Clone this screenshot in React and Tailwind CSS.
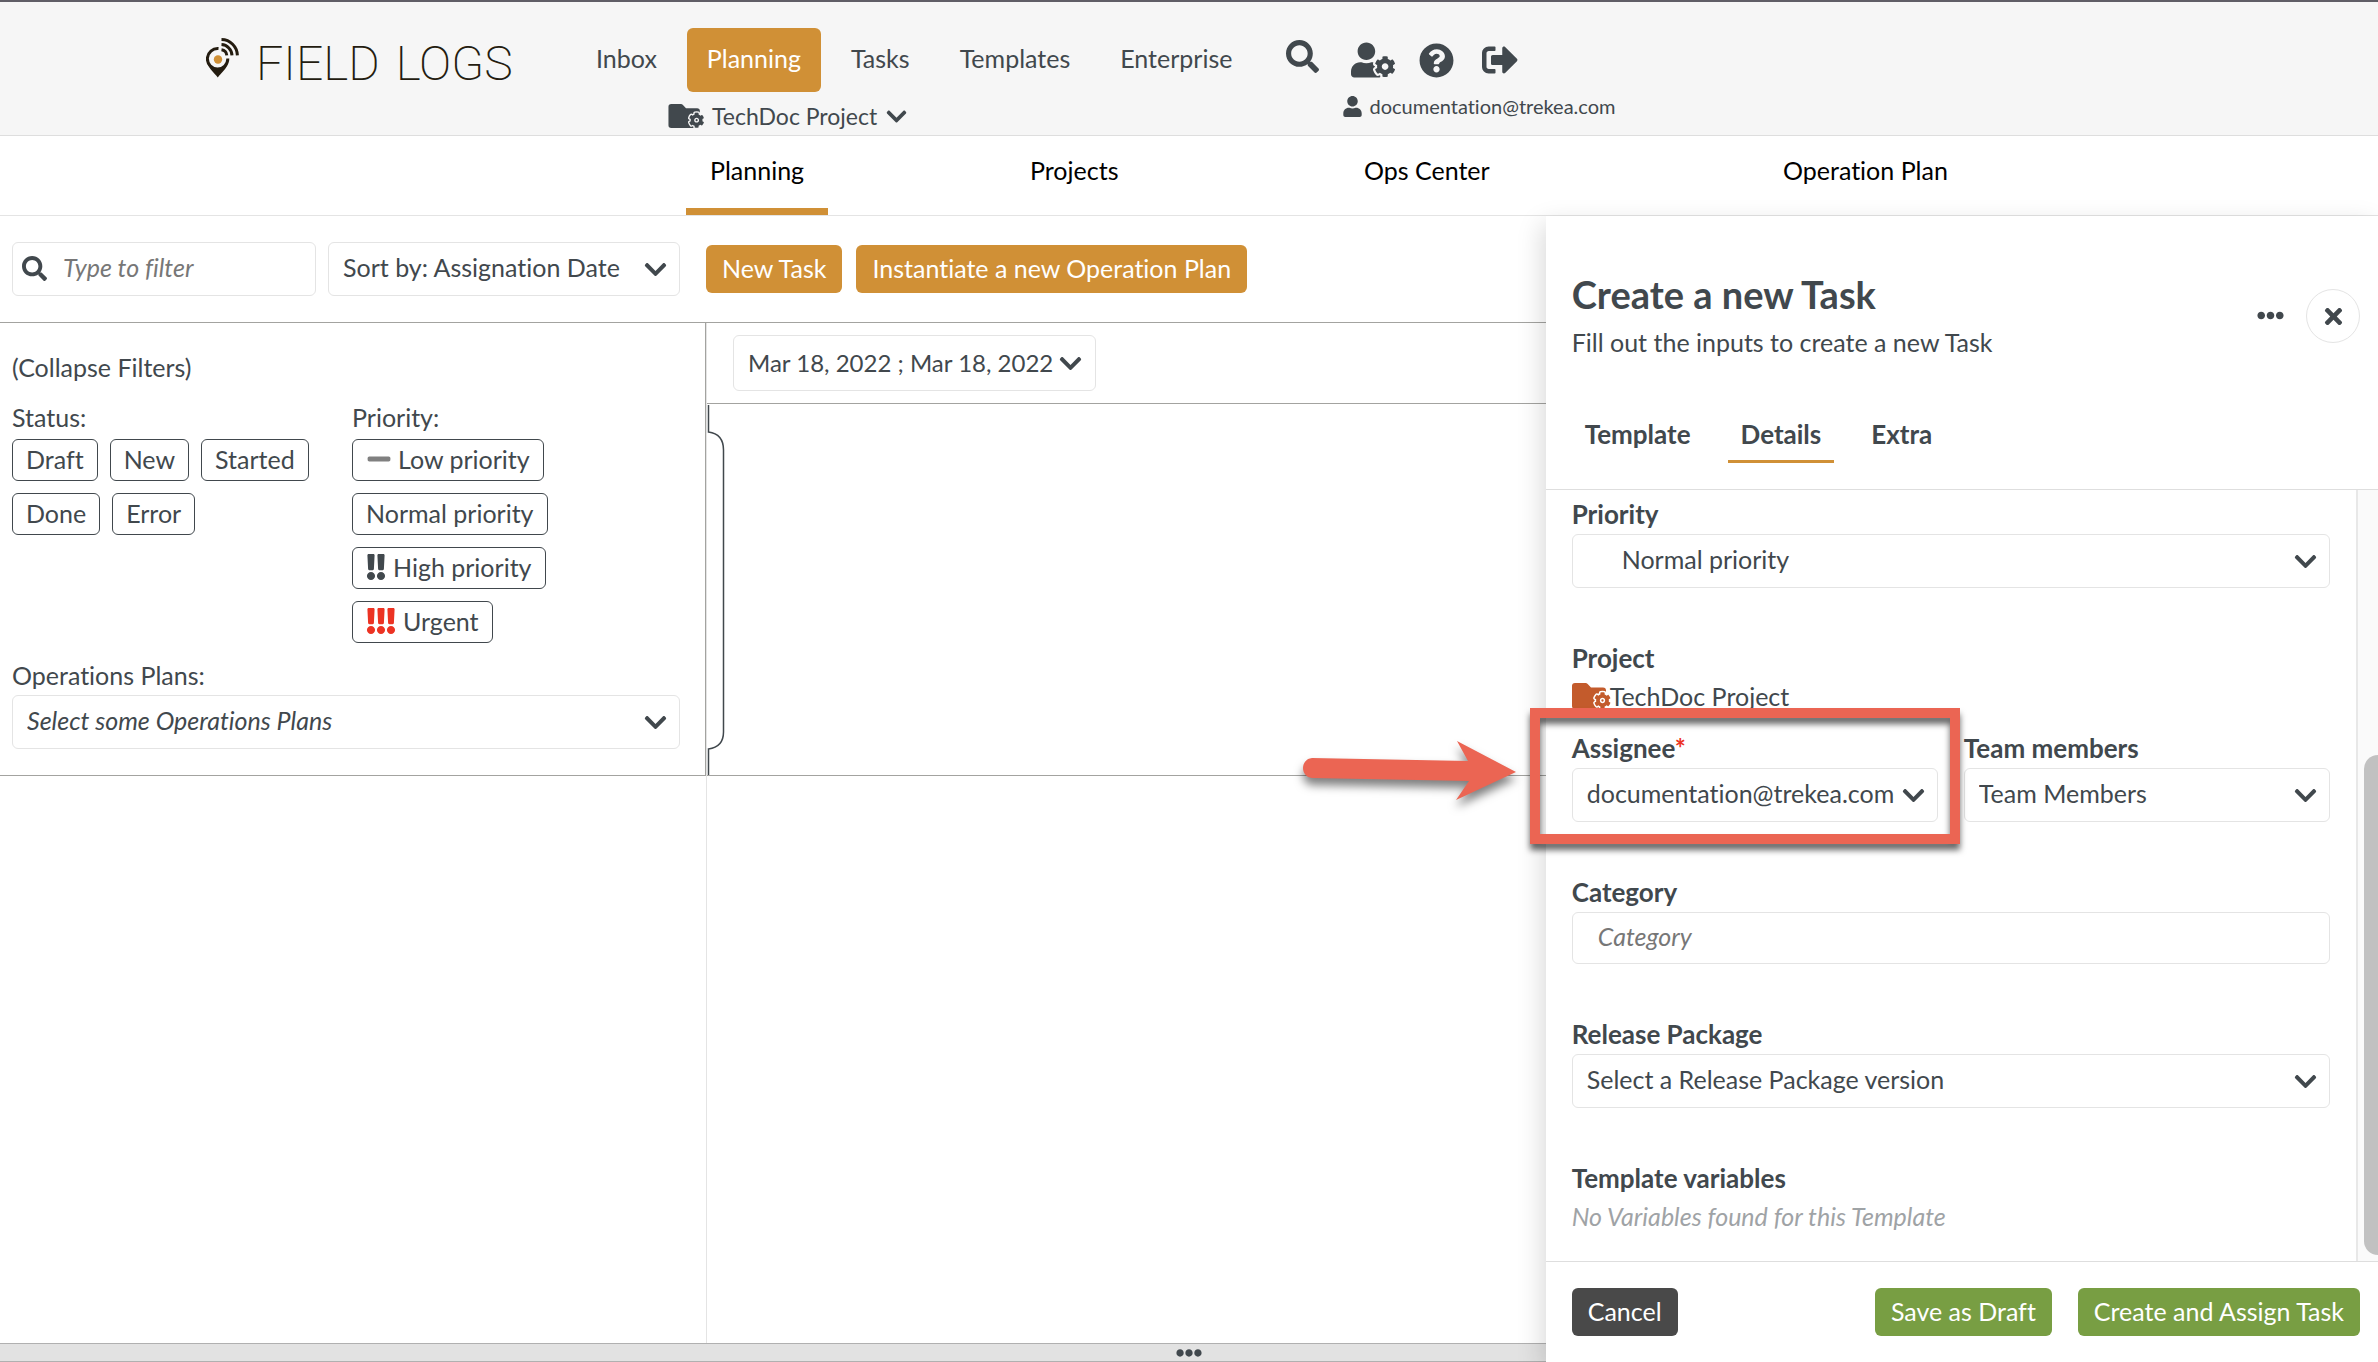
import React from 'react';
import {
  FaChevronDown,
  FaCog,
  FaEllipsisH,
  FaExclamation,
  FaMinus,
  FaQuestionCircle,
  FaSearch,
  FaSignOutAlt,
  FaTimes,
  FaUser,
  FaUserCog,
} from 'react-icons/fa';
import clsx from 'clsx';

const navLinks = ['Inbox', 'Planning', 'Tasks', 'Templates', 'Enterprise'];

const subTabs = ['Planning', 'Projects', 'Ops Center', 'Operation Plan'];

const statuses = ['Draft', 'New', 'Started', 'Done', 'Error'];

const priorities = [
  { label: 'Low priority', icon: FaMinus, count: 1, color: 'text-[#808080]', size: 26, iconClass: '' },
  { label: 'Normal priority', icon: null, count: 0 },
  { label: 'High priority', icon: FaExclamation, count: 2, color: 'text-[#41484d]', size: 26, iconClass: '-mx-2' },
  { label: 'Urgent', icon: FaExclamation, count: 3, color: 'text-[#ec3323]', size: 26, iconClass: '-mx-2' },
];

const drawerTabs = ['Template', 'Details', 'Extra'];

const Logo = () => (
  <a href="#home" className="flex items-start gap-4 text-[#241c10]">
    <svg width="34" height="42" viewBox="0 0 34 42" fill="none" aria-hidden="true">
      <path d="M12.5 10.6A10.2 10.2 0 1 0 21.8 20.6" stroke="#241c10" strokeWidth="3" />
      <path d="M1.2 24.5C3 31 8.5 35 11.8 39.5C15 35 20.5 31 22.5 24.5C19.5 29.5 16 31.5 11.8 31.5C7.5 31.5 4 29.5 1.2 24.5Z" fill="#241c10" />
      <circle cx="12" cy="21.5" r="4.2" fill="#d09036" />
      <path d="M15.5 11.8A6.2 6.2 0 0 1 20.8 17.4" stroke="#241c10" strokeWidth="3" />
      <path d="M15.5 6.6A11.2 11.2 0 0 1 26 17.4" stroke="#241c10" strokeWidth="3" />
      <path d="M15.5 1.6A16.2 16.2 0 0 1 31.4 17.4" stroke="#241c10" strokeWidth="3" />
    </svg>
    <span className="flex gap-4 pt-[2px] font-[Roboto,sans-serif] text-5xl font-extralight">
      <span>FIELD</span>
      <span>LOGS</span>
    </span>
  </a>
);

const FolderCog = ({ halo, className }) => (
  <svg width="38" height="26" viewBox="0 0 38 26" overflow="visible" className={className} aria-hidden="true">
    <path d="M3 0h10.5a3 3 0 0 1 2.2 1L19 4.5h12a3 3 0 0 1 3 3V23a3 3 0 0 1-3 3H3a3 3 0 0 1-3-3V3a3 3 0 0 1 3-3z" fill="currentColor" />
    <svg x="22" y="9" width="17" height="17" viewBox="0 0 512 512" overflow="visible">
      <FaCog size={512} stroke={halo} strokeWidth={90} color={halo} overflow="visible" />
      <FaCog size={512} />
    </svg>
  </svg>
);

const Select = ({ id, label, children, className, selectClass }) => (
  <div className={clsx('relative', className)}>
    <select
      id={id}
      aria-label={label}
      className={clsx('h-[54px] w-full appearance-none rounded-md border border-[#e4e4e4] bg-white pr-8 pb-1 outline-none', selectClass || 'pl-[14px]')}
    >
      <option>{children}</option>
    </select>
    <FaChevronDown size={25} className="pointer-events-none absolute top-[15px] right-3" />
  </div>
);

const Field = ({ id, label, required, children, className }) => (
  <div className={className}>
    <label htmlFor={id} className="block text-[26px] leading-10 font-bold">
      {label}
      {required && <span className="text-[#ec3323]">*</span>}
    </label>
    {children}
  </div>
);

const Header = () => (
  <header className="flex h-[136px] border-t-2 border-b border-t-[#605e66] border-b-[#dedede] bg-[#f6f6f6] pl-[206px]">
    <div className="w-[370px] pt-9">
      <Logo />
    </div>
    <div className="pt-[26px]">
      <nav className="flex gap-[10px]">
        {navLinks.map((link) => (
          <a
            key={link}
            href={`#${link.toLowerCase()}`}
            className={clsx('flex h-16 items-center rounded-md px-5 pb-1', link === 'Planning' && 'bg-[#d09036] text-white')}
          >
            {link}
          </a>
        ))}
      </nav>
      <button type="button" className="ml-[92px] flex h-12 items-center gap-2 text-[23px]">
        <FolderCog halo="#f6f6f6" className="h-6 w-9" />
        <span>TechDoc Project</span>
        <FaChevronDown size={23} />
      </button>
    </div>
    <div className="pt-9 pl-[34px]">
      <div className="flex h-11 items-center gap-6">
        <button type="button" aria-label="Search" className="self-start pt-[2px] pr-2">
          <FaSearch size={33} />
        </button>
        <button type="button" aria-label="User settings">
          <FaUserCog size={44} />
        </button>
        <button type="button" aria-label="Help">
          <FaQuestionCircle size={35} />
        </button>
        <button type="button" aria-label="Sign out" className="pl-1">
          <FaSignOutAlt size={36} />
        </button>
      </div>
      <div className="flex h-12 items-center gap-[6px] pl-[56px] text-[20px]">
        <FaUser size={21} />
        <span>documentation@trekea.com</span>
      </div>
    </div>
  </header>
);

const SubTabs = () => (
  <nav className="grid h-20 grid-cols-[320fr_334fr_419fr_619fr] border-b border-[#e4e4e4] pl-[686px] text-black">
    {subTabs.map((tab, i) => (
      <a
        key={tab}
        href={`#${tab.toLowerCase().replace(' ', '-')}`}
        className={clsx('justify-self-start border-b-[7px] px-6 pt-[14px] leading-10', i === 0 ? 'border-[#d09036]' : 'border-transparent')}
      >
        {tab}
      </a>
    ))}
  </nav>
);

const Toolbar = () => (
  <div className="flex h-[107px] items-center border-b border-[#a3a3a0] pb-[1px] pl-3">
    <div className="relative w-[304px]">
      <FaSearch size={25} className="absolute top-[14px] left-[10px]" />
      <input
        type="text"
        aria-label="Filter"
        placeholder="Type to filter"
        className="h-[54px] w-full rounded-md border border-[#e4e4e4] pb-1 pl-[50px] italic outline-none placeholder:text-[#777]"
      />
    </div>
    <Select label="Sort by" className="ml-3 w-[352px]">Sort by: Assignation Date</Select>
    <button type="button" className="ml-[26px] h-12 rounded-md bg-[#d09036] px-4 pb-[2px] text-white">
      New Task
    </button>
    <button type="button" className="ml-[14px] h-12 rounded-md bg-[#d09036] px-4 pb-[2px] text-white">
      Instantiate a new Operation Plan
    </button>
  </div>
);

const Filters = () => (
  <aside className="flex w-[707px] shrink-0 flex-col border-r border-[#e4e4e4]">
    <div className="h-[453px] border-r border-b border-[#a3a3a0] pt-6 pr-[25px] pl-3">
      <button type="button" className="block leading-10">(Collapse Filters)</button>
      <div className="mt-3 flex">
        <div className="w-[340px]">
          <div className="leading-9">Status:</div>
          <div className="flex flex-wrap gap-x-3 gap-y-3 pt-1">
            {statuses.map((s) => (
              <button key={s} type="button" className="h-[42px] rounded-md border border-[#41484d] px-[13px] pb-[2px]">
                {s}
              </button>
            ))}
          </div>
        </div>
        <div>
          <div className="leading-9">Priority:</div>
          <div className="flex flex-col items-start gap-3 pt-1">
            {priorities.map((p) => (
              <button key={p.label} type="button" className="flex h-[42px] items-center gap-[6px] rounded-md border border-[#41484d] px-[13px] pb-[2px]">
                {p.icon && (
                  <span className={clsx('flex', p.color, p.count > 1 && 'pr-[1px]')}>
                    {Array.from({ length: p.count }, (_, i) => (
                      <p.icon key={i} size={p.size} className={p.iconClass} />
                    ))}
                  </span>
                )}
                {p.label}
              </button>
            ))}
          </div>
        </div>
      </div>
      <label htmlFor="plans" className="mt-3 block leading-10">Operations Plans:</label>
      <Select id="plans" selectClass="pl-[14px] italic">Select some Operations Plans</Select>
    </div>
  </aside>
);

const Timeline = () => (
  <section className="flex-1">
    <div className="h-[81px] border-b border-[#a3a3a0] px-[26px] pt-3">
      <button type="button" className="flex h-14 w-[363px] items-center justify-between rounded-md border border-[#e4e4e4] pr-3 pl-[14px] text-2xl">
        Mar 18, 2022 ; Mar 18, 2022
        <FaChevronDown size={25} />
      </button>
    </div>
    <div className="h-[372px] border-b border-[#a3a3a0]">
      <svg width="20" height="371" viewBox="0 0 20 371" fill="none" stroke="#41484d" aria-hidden="true">
        <path d="M1.5 1V28Q16.5 30 16.5 46V328Q16.5 343 1.5 345V371" strokeWidth="1.5" />
      </svg>
    </div>
  </section>
);

// Highlight frame and pointer around the Assignee field
const Callout = () => (
  <>
    <div className="pointer-events-none absolute top-[492px] -left-4 h-[136px] w-[430px] border-[10px] border-[#eb6553] drop-shadow-[0_6px_3px_rgba(0,0,0,0.6)]" />
    <svg className="pointer-events-none absolute top-[522px] -left-[246px] drop-shadow-[0_7px_5px_rgba(0,0,0,0.5)]" width="224" height="82" viewBox="0 0 224 82" aria-hidden="true">
      <path d="M12 20L168 23L157 3L216 34L156 62L169 43L12 40C0 39 0 21 12 20Z" fill="#eb6553" />
    </svg>
  </>
);

const TaskDrawer = () => (
  <aside className="absolute inset-y-0 right-0 flex w-[35%] flex-col bg-white shadow-[-4px_8px_24px_rgba(0,0,0,0.15)]">
    <div className="flex h-[274px] flex-col justify-between border-b border-[#dedede]">
      <div className="flex items-center pt-[52px] pr-[18px] pl-[26px]">
        <div className="flex-1">
          <h1 className="text-[38px] leading-[52px] font-bold">Create a new Task</h1>
          <p className="leading-[44px]">Fill out the inputs to create a new Task</p>
        </div>
        <button type="button" aria-label="More" className="pb-[2px]">
          <FaEllipsisH size={27} />
        </button>
        <button type="button" aria-label="Close" className="ml-[22px] flex size-[54px] items-center justify-center rounded-full border border-[#e4e4e4]">
          <FaTimes size={25} />
        </button>
      </div>
      <div className="flex gap-6 pb-[26px] pl-[26px] text-[26px] font-bold">
        {drawerTabs.map((tab) => (
          <button
            key={tab}
            type="button"
            className={clsx('h-[54px] border-b-[3px] px-[13px] pb-[2px]', tab === 'Details' ? 'border-[#d09036]' : 'border-transparent')}
          >
            {tab}
          </button>
        ))}
      </div>
    </div>

    <div className="flex flex-1">
      <div className="flex-1 pt-1 pr-[26px] pl-[26px]">
        <Field id="priority" label="Priority">
          <Select id="priority" selectClass="pl-[49px]">Normal priority</Select>
        </Field>
        <div className="mt-[50px]">
          <div className="text-[26px] leading-10 font-bold">Project</div>
          <div className="flex h-9 items-center text-[#41484d]">
            <FolderCog halo="#ffffff" className="text-[#c35b2c]" />
            <span>TechDoc Project</span>
          </div>
        </div>
        <div className="mt-[14px] grid grid-cols-2 gap-[26px]">
          <Field id="assignee" label="Assignee" required>
            <Select id="assignee">documentation@trekea.com</Select>
          </Field>
          <Field id="team" label="Team members">
            <Select id="team">Team Members</Select>
          </Field>
        </div>
        <Field id="category" label="Category" className="mt-[50px]">
          <input
            id="category"
            type="text"
            placeholder="Category"
            className="h-[52px] w-full rounded-md border border-[#e4e4e4] px-[25px] pb-1 italic outline-none placeholder:text-[#777]"
          />
        </Field>
        <Field id="release" label="Release Package" className="mt-[50px]">
          <Select id="release">Select a Release Package version</Select>
        </Field>
        <div className="mt-[50px]">
          <div className="text-[26px] leading-10 font-bold">Template variables</div>
          <p className="leading-9 text-[#9fa3a6] italic">No Variables found for this Template</p>
        </div>
      </div>
      {/* scroll track */}
      <div className="flex w-[22px] flex-col justify-end border-l-2 border-[#e8e8e8] bg-[#fafafa] pb-[6px] pl-[6px]">
        <div className="h-[500px] rounded-l-full rounded-r-sm bg-[#c1c1c1]" />
      </div>
    </div>

    <div className="flex h-[101px] gap-[26px] border-t border-[#dedede] pt-[26px] pr-[18px] pl-[26px] text-white">
      <button type="button" className="mr-auto h-12 rounded-md bg-[#494949] px-4 pb-[2px]">Cancel</button>
      <button type="button" className="h-12 rounded-md bg-[#789e43] px-4 pb-[2px]">Save as Draft</button>
      <button type="button" className="h-12 rounded-md bg-[#789e43] px-4 pb-[2px]">Create and Assign Task</button>
    </div>
    <Callout />
  </aside>
);

export default function App() {
  return (
    <div className="flex min-h-screen flex-col overflow-x-hidden bg-white font-[Lato,sans-serif] text-[25px] leading-9 text-[#41484d] [font-variant-ligatures:none]">
      <Header />
      <SubTabs />
      <main className="relative flex flex-1 flex-col">
        <Toolbar />
        <div className="flex flex-1">
          <Filters />
          <Timeline />
        </div>
        <div className="flex h-[19px] items-center justify-center border-y border-[#b0b0b0] bg-[#e2e2e2]">
          <FaEllipsisH size={26} />
        </div>
        <TaskDrawer />
      </main>
    </div>
  );
}
